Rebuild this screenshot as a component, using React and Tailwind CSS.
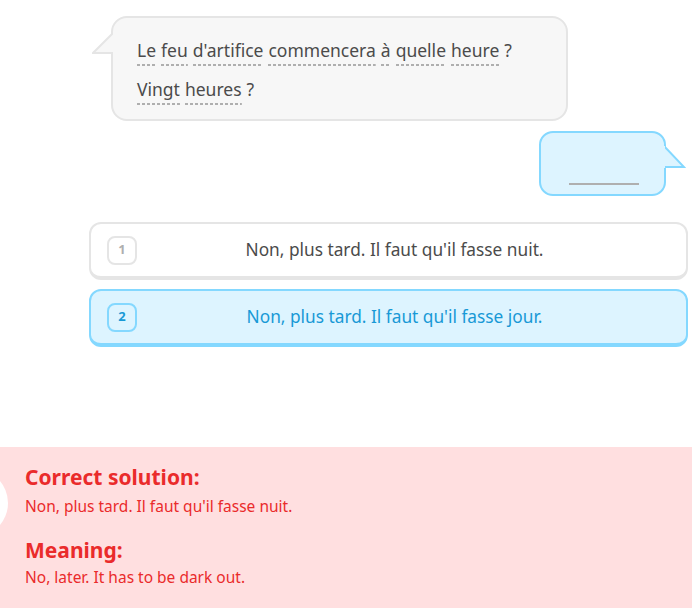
const font = { fontFamily: '"Noto Sans", "Open Sans", sans-serif' };

function Word({ children }) {
  return (
    <span className="pb-[4px] bg-[repeating-linear-gradient(90deg,#afafaf_0_3px,transparent_3px_5px)] bg-[length:100%_2px] bg-bottom bg-no-repeat">
      {children}
    </span>
  );
}

function Option({ num, text, selected }) {
  const box = selected
    ? "bg-[#ddf4ff] border-[#84d8ff] text-[#1899d6]"
    : "bg-white border-[#e5e5e5] text-[#4b4b4b]";
  const badge = selected
    ? "border-[#84d8ff] text-[#1899d6]"
    : "border-[#e5e5e5] text-[#afafaf]";
  return (
    <div className={`flex items-center h-[58px] rounded-[12px] border-2 border-b-4 pl-4 pr-[34px] ${box}`}>
      <div className={`w-[30px] h-[29px] rounded-[8px] border-2 flex items-center justify-center text-[13px] font-bold ${badge}`}>
        {num}
      </div>
      <div className="flex-1 text-center text-[17.3px]">{text}</div>
    </div>
  );
}

export default function App() {
  return (
    <div className="w-[692px] h-[608px] bg-white flex flex-col overflow-hidden" style={font}>
      <div className="relative ml-[111px] mt-[16px] w-[457px] h-[105px] rounded-[16px] border-2 border-[#e5e5e5] bg-[#f7f7f7] pl-[24px] pt-[20px] text-[17.5px] text-[#4b4b4b]">
        <svg className="absolute left-[-21px] top-[15px]" width="23" height="22" viewBox="0 0 23 22">
          <path d="M21 0 L1 20 L21 20" fill="#f7f7f7" stroke="#e5e5e5" strokeWidth="2" />
          <rect x="21" y="0" width="2" height="22" fill="#f7f7f7" />
        </svg>
        <div className="flex gap-[5px] leading-[24px]">
          <Word>Le</Word> <Word>feu</Word> <Word>d'artifice</Word> <Word>commencera</Word> <Word>à</Word> <Word>quelle</Word> <Word>heure</Word> <span>?</span>
        </div>
        <div className="flex gap-[5px] leading-[24px] mt-[11px]">
          <Word>Vingt</Word> <Word>heures</Word> <span>?</span>
        </div>
      </div>

      <div className="relative ml-[539px] mt-[10px] w-[127px] h-[65px] rounded-[14px] border-2 border-[#84d8ff] bg-[#ddf4ff] flex items-end justify-center pb-[9px]">
        <svg className="absolute right-[-22px] top-[13px]" width="23" height="24" viewBox="0 0 23 24">
          <path d="M1 0 L21 21 L1 21" fill="#ddf4ff" stroke="#84d8ff" strokeWidth="2" />
          <rect x="0" y="0" width="2" height="22" fill="#ddf4ff" />
        </svg>
        <div className="w-[70px] h-[2px] bg-[#afafaf] ml-[2px]" />
      </div>

      <div className="ml-[89px] mt-[26px] w-[599px] flex flex-col gap-[9px]">
        <Option num="1" text="Non, plus tard. Il faut qu'il fasse nuit." />
        <Option num="2" text="Non, plus tard. Il faut qu'il fasse jour." selected />
      </div>

      <div className="relative mt-[100px] flex-1 bg-[#ffdfe0] pl-[25px] pt-[13px] text-[#ea2b2b]">
        <div className="absolute left-[-60px] top-[22px] w-[68px] h-[68px] rounded-full bg-white" />
        <div className="text-[21px] font-bold leading-[34px]">Correct solution:</div>
        <div className="text-[15.5px] leading-[24px]">Non, plus tard. Il faut qu'il fasse nuit.</div>
        <div className="text-[21px] font-bold leading-[30px] mt-[17px]">Meaning:</div>
        <div className="text-[15.5px] leading-[24px]">No, later. It has to be dark out.</div>
      </div>
    </div>
  );
}
